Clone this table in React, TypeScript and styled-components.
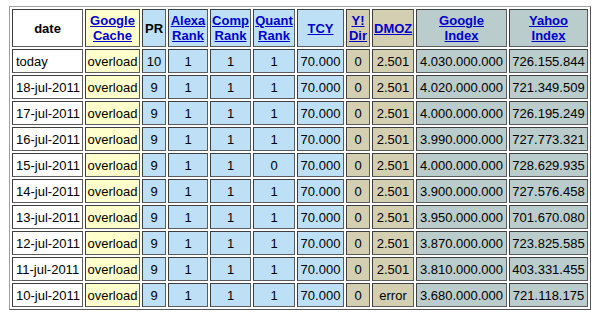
import React from "react";
import styled, { createGlobalStyle } from "styled-components";

const Global = createGlobalStyle`
  html, body { margin: 0; padding: 0; background: #ffffff; }
  body { font-family: "Liberation Sans", Arial, sans-serif; }
`;

type Tone = "white" | "yellow" | "blue" | "tan" | "gray";

const tones: Record<Tone, string> = {
  white: "#ffffff",
  yellow: "#ffffcc",
  blue: "#bde0f6",
  tan: "#d5cfb1",
  gray: "#bacccb",
};

const Table = styled.table`
  margin: 6px 0 0 9px;
  width: 582px;
  table-layout: fixed;
  border-collapse: separate;
  border-spacing: 2px;
  border-style: solid;
  border-width: 1px;
  border-color: #a0a0a0 #555555 #555555 #a0a0a0;
  font-family: "Liberation Sans", Arial, sans-serif;
  font-size: 13px;
  color: #000;
`;

const HeadCell = styled.th<{ $tone: Tone; $w: number }>`
  box-sizing: border-box;
  width: ${(p) => p.$w}px;
  height: 38px;
  padding: 0 1px;
  background: ${(p) => tones[p.$tone]};
  border-style: solid;
  border-width: 1px;
  border-color: #3f3f3f #5c5c5c #5c5c5c #3f3f3f;
  font-weight: bold;
  font-size: 13px;
  line-height: 15px;
  text-align: center;
  vertical-align: middle;
`;

const HeadLink = styled.a`
  color: #0000cc;
  text-decoration: underline;
`;

const Cell = styled.td<{ $tone: Tone; $left?: boolean }>`
  box-sizing: border-box;
  height: 24px;
  padding: 0 ${(p) => (p.$left ? "2px 0 3px" : "1px")};
  background: ${(p) => tones[p.$tone]};
  border-style: solid;
  border-width: 1px;
  border-color: #3f3f3f #5c5c5c #5c5c5c #3f3f3f;
  text-align: ${(p) => (p.$left ? "left" : "center")};
  vertical-align: middle;
  white-space: nowrap;
  line-height: 15px;
`;

type Col = { key: string; label: string[]; link: boolean; tone: Tone; w: number };

const cols: Col[] = [
  { key: "date", label: ["date"], link: false, tone: "white", w: 71 },
  { key: "gc", label: ["Google", "Cache"], link: true, tone: "yellow", w: 55 },
  { key: "pr", label: ["PR"], link: false, tone: "blue", w: 24 },
  { key: "alexa", label: ["Alexa", "Rank"], link: true, tone: "blue", w: 40 },
  { key: "comp", label: ["Comp", "Rank"], link: true, tone: "blue", w: 41 },
  { key: "quant", label: ["Quant", "Rank"], link: true, tone: "blue", w: 42 },
  { key: "tcy", label: ["TCY"], link: true, tone: "blue", w: 47 },
  { key: "ydir", label: ["Y!", "Dir"], link: true, tone: "tan", w: 24 },
  { key: "dmoz", label: ["DMOZ"], link: true, tone: "tan", w: 42 },
  { key: "gi", label: ["Google", "Index"], link: true, tone: "gray", w: 91 },
  { key: "yi", label: ["Yahoo", "Index"], link: true, tone: "gray", w: 79 },
];

const rows: string[][] = [
  ["today", "overload", "10", "1", "1", "1", "70.000", "0", "2.501", "4.030.000.000", "726.155.844"],
  ["18-jul-2011", "overload", "9", "1", "1", "1", "70.000", "0", "2.501", "4.020.000.000", "721.349.509"],
  ["17-jul-2011", "overload", "9", "1", "1", "1", "70.000", "0", "2.501", "4.000.000.000", "726.195.249"],
  ["16-jul-2011", "overload", "9", "1", "1", "1", "70.000", "0", "2.501", "3.990.000.000", "727.773.321"],
  ["15-jul-2011", "overload", "9", "1", "1", "0", "70.000", "0", "2.501", "4.000.000.000", "728.629.935"],
  ["14-jul-2011", "overload", "9", "1", "1", "1", "70.000", "0", "2.501", "3.900.000.000", "727.576.458"],
  ["13-jul-2011", "overload", "9", "1", "1", "1", "70.000", "0", "2.501", "3.950.000.000", "701.670.080"],
  ["12-jul-2011", "overload", "9", "1", "1", "1", "70.000", "0", "2.501", "3.870.000.000", "723.825.585"],
  ["11-jul-2011", "overload", "9", "1", "1", "1", "70.000", "0", "2.501", "3.810.000.000", "403.331.455"],
  ["10-jul-2011", "overload", "9", "1", "1", "1", "70.000", "0", "error", "3.680.000.000", "721.118.175"],
];

export default function App() {
  return (
    <>
      <Global />
      <Table>
        <thead>
          <tr>
            {cols.map((c) => (
              <HeadCell key={c.key} $tone={c.tone} $w={c.w}>
                {c.link ? (
                  <HeadLink href="#">
                    {c.label.map((l, i) => (
                      <React.Fragment key={i}>
                        {i > 0 && <br />}
                        {l}
                      </React.Fragment>
                    ))}
                  </HeadLink>
                ) : (
                  c.label[0]
                )}
              </HeadCell>
            ))}
          </tr>
        </thead>
        <tbody>
          {rows.map((r, ri) => (
            <tr key={ri}>
              {r.map((v, ci) => (
                <Cell key={ci} $tone={cols[ci].tone} $left={ci === 0}>
                  {v}
                </Cell>
              ))}
            </tr>
          ))}
        </tbody>
      </Table>
    </>
  );
}
